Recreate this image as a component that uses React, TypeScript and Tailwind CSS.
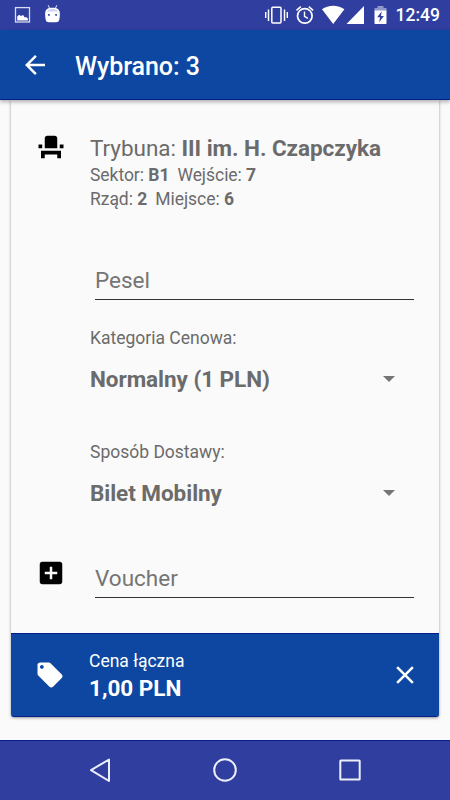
import type { ReactNode } from "react";

function Icon({ d, className }: { d: string; className: string }) {
  return (
    <svg viewBox="0 0 24 24" className={"block shrink-0 fill-current " + className}>
      <path d={d} />
    </svg>
  );
}

const SEAT = "M4 18v3h3v-3h10v3h3v-6H4zm15-8h3v3h-3zM2 10h3v3H2zm15 3H7V5c0-1.1.9-2 2-2h6c1.1 0 2 .9 2 2v8z";
const ADD_BOX = "M19 3H5c-1.11 0-2 .9-2 2v14c0 1.1.89 2 2 2h14c1.1 0 2-.9 2-2V5c0-1.1-.9-2-2-2zm-2 10h-4v4h-2v-4H7v-2h4V7h2v4h4v2z";
const TAG = "M21.41 11.58l-9-9C12.05 2.22 11.55 2 11 2H4c-1.1 0-2 .9-2 2v7c0 .55.22 1.05.59 1.42l9 9c.36.36.86.58 1.41.58.55 0 1.05-.22 1.41-.59l7-7c.37-.36.59-.86.59-1.41 0-.55-.23-1.06-.59-1.42zM5.5 7C4.67 7 4 6.33 4 5.5S4.67 4 5.5 4 7 4.67 7 5.5 6.33 7 5.5 7z";
const CLOSE = "M19 6.41L17.59 5 12 10.59 6.41 5 5 6.41 10.59 12 5 17.59 6.41 19 12 13.41 17.59 19 19 17.59 13.41 12z";
const BACK = "M20 11H7.83l5.59-5.59L12 4l-8 8 8 8 1.41-1.41L7.83 13H20v-2z";

function StatusBar() {
  return (
    <div className="flex h-[30px] shrink-0 items-center justify-between bg-[#303f9f] text-white">
      <svg viewBox="0 0 70 30" className="block h-[30px] w-[70px]">
        <rect x="15.500" y="7.600" width="14" height="14.400" fill="none" stroke="#d9dcf0" strokeWidth="1.300" />
        <path d="M17.200 20.400v-4l2-1.700 1.700 1.200 2.200-.8 1.600 2.300 1.300-.5 1.900 1.600v1.900z" fill="#fff" />
        <path d="M48.200 5.200l1.500 3.400M56.800 5.200l-1.500 3.400" stroke="#e6e8f5" strokeWidth="1" fill="none" />
        <path d="M45.400 11.500c.7-2.300 2.600-3.800 7.100-3.800s6.400 1.500 7.100 3.800c.5 2 .3 5.500-.3 8.200-.3 1.700-1.500 2.500-3.300 2.500h-7c-1.800 0-3-.8-3.300-2.500-.6-2.700-.8-6.200-.3-8.200z" fill="#fff" />
        <path d="M46.700 11.400c1-1.500 2.600-2.500 5.800-2.500s4.800 1 5.800 2.500z" fill="#cfd3ec" />
        <rect x="48" y="14" width="1.800" height="1.800" fill="#4955aa" />
        <rect x="55.200" y="14" width="1.800" height="1.800" fill="#4955aa" />
      </svg>
      <div className="flex items-center pr-[10px]">
        <svg viewBox="260 0 133 30" className="block h-[30px] w-[133px]">
          <g stroke="#fff" fill="none">
            <rect x="271.800" y="7.200" width="9.200" height="15.800" rx="1" strokeWidth="1.500" />
            <path d="M268.500 9.500v11.500M284.500 9.500v11.500" strokeWidth="1.500" />
            <path d="M265.700 12v6M287.300 12v6" strokeWidth="1.400" />
            <circle cx="304.800" cy="15.900" r="7.300" strokeWidth="1.700" />
            <path d="M304.500 11.500v4.800l3.400 2" strokeWidth="1.400" />
            <path d="M296.500 10.300l4.300-3.600M313.100 10.300l-4.300-3.600" strokeWidth="1.600" />
          </g>
          <path d="M333.200 24L322 9.300c6.200-4.800 16.200-4.800 22.400 0zM364 6v18h-17.500z" fill="#fff" />
          <path d="M374.500 11V8h3V6h6v2h3v3z" fill="#8f97cb" />
          <path d="M374.500 10.500h12V23.200q0 .8-.8.800h-10.400q-.8 0-.8-.8z" fill="#fff" />
          <path d="M381.800 11.300l-4.600 6h2.900l-1 4.900 4.800-6.200h-3z" fill="#303f9f" />
        </svg>
        <span className="ml-[2px] w-[45px] pt-px text-right text-[17.5px] leading-[29px] font-medium">12:49</span>
      </div>
    </div>
  );
}

function Select({ label, value, className }: { label: string; value: string; className: string }) {
  return (
    <div className={className}>
      <div className="h-6 text-[17.5px] leading-6">{label}</div>
      <div className="mt-[15px] flex h-7 items-center justify-between pr-[19px] text-[22.5px] leading-7 font-bold tracking-[-0.05px]">
        <span>{value}</span>
        <svg viewBox="0 0 12 6" className="block h-[6px] w-[12px] fill-[#757575]">
          <path d="M0 0h12L6 6z" />
        </svg>
      </div>
    </div>
  );
}

function Field({ children }: { children: ReactNode }) {
  return (
    <div className="ml-[5px] h-8 border-b border-[#333] text-[22.5px] leading-[25px] text-[#757575]">{children}</div>
  );
}

export default function App() {
  return (
    <div className="flex h-[800px] w-[450px] flex-col overflow-hidden bg-[#fafafa] font-[Roboto,sans-serif]">
      <StatusBar />
      <header className="z-10 flex h-[70px] shrink-0 items-center border-b border-[#051e8c] bg-[#0d47a1] pl-5 text-white shadow-[0_2px_4px_rgba(0,0,0,0.3)]">
        <Icon d={BACK} className="size-[30px]" />
        <h1 className="ml-[25px] pt-[5px] text-[25px] leading-[30px] font-medium tracking-[-0.05px]">Wybrano: 3</h1>
      </header>
      <main className="h-[640px] px-[11px]">
        <section className="flex h-[617px] flex-col rounded-b-[3px] text-[#6b6b6b] shadow-[0_1px_3px_rgba(0,0,0,0.4)]">
          <div className="flex h-[533px] pr-[25px] pl-[25px]">
            <div className="w-[54px] pt-8">
              <Icon d={SEAT} className="size-[30px] text-black" />
              <Icon d={ADD_BOX} className="mt-[396px] size-[30px] text-black" />
            </div>
            <div className="flex-1 pt-[35px] whitespace-nowrap">
              <div className="h-7 text-[22.5px] leading-[27px] tracking-[-0.04px]">
                Trybuna: <b>III im. H. Czapczyka</b>
              </div>
              <div className="h-6 text-[17.5px] leading-6 tracking-[-0.04px]">
                Sektor: <b>B1</b><span className="ml-2">Wejście: <b>7</b></span>
              </div>
              <div className="h-6 text-[17.5px] leading-6 tracking-[-0.04px]">
                Rząd: <b>2</b><span className="ml-2">Miejsce: <b>6</b></span>
              </div>
              <div className="pt-[57px]">
                <Field>Pesel</Field>
              </div>
              <Select label="Kategoria Cenowa:" value="Normalny (1 PLN)" className="mt-[26px]" />
              <Select label="Sposób Dostawy:" value="Bilet Mobilny" className="mt-[47px]" />
              <div className="pt-[59px]">
                <Field>Voucher</Field>
              </div>
            </div>
          </div>
          <footer className="flex h-[84px] items-center rounded-b-[3px] border-y border-[#051e8c] bg-[#0d47a1] pr-[19px] pl-[24px] text-white">
            <Icon d={TAG} className="size-[30px]" />
            <div className="ml-[24px] flex-1">
              <div className="text-[17.5px] leading-[27px]">Cena łączna</div>
              <div className="text-[22.5px] leading-[27px] font-bold">1,00 PLN</div>
            </div>
            <Icon d={CLOSE} className="size-[30px]" />
          </footer>
        </section>
      </main>
      <nav className="h-[60px] shrink-0 border-t border-[#051e8c] bg-[#303f9f]">
        <svg viewBox="0 741 450 59" className="block h-[59px] w-[450px]" fill="none" stroke="#eceefa" strokeWidth="2" strokeLinejoin="round">
          <path d="M109 759.500v21.500L91 770.200z" />
          <circle cx="225" cy="770" r="10.800" />
          <rect x="340.300" y="760.500" width="19.400" height="19" rx="0.500" />
        </svg>
      </nav>
    </div>
  );
}
